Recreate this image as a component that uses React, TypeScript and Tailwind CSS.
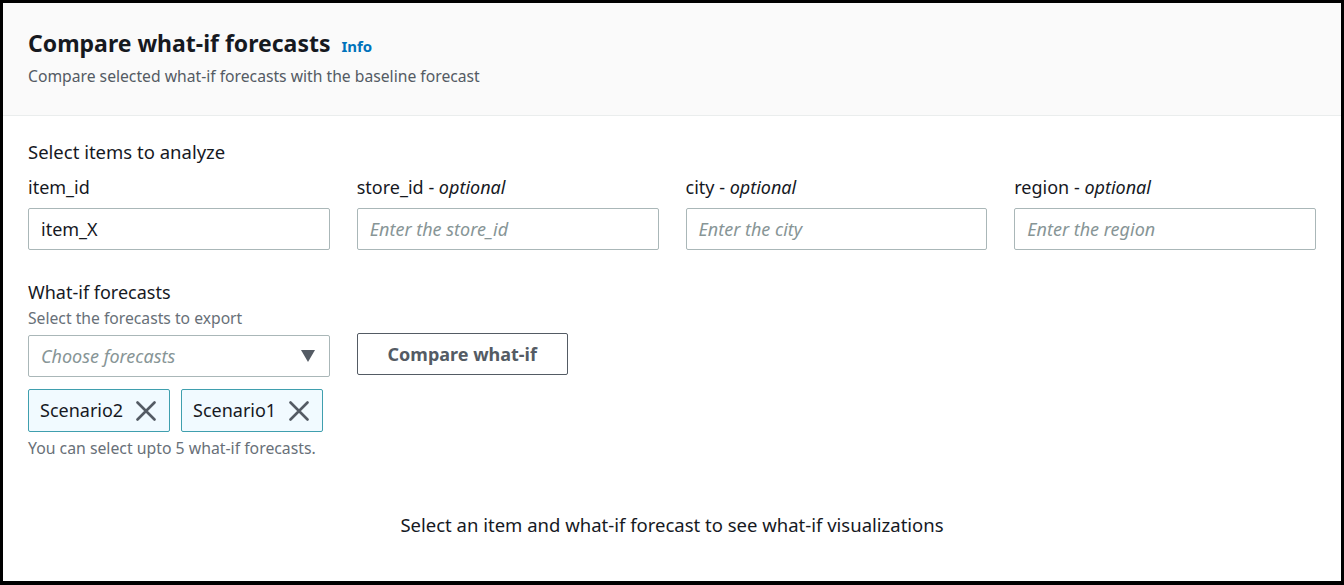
function Field({ label, optional, value, placeholder }: { label: string; optional?: boolean; value?: string; placeholder?: string }) {
  return (
    <div className="flex flex-col">
      <label className="text-[18px] leading-[24px] text-[#16191f] mb-[9px]">
        {label}
        {optional && (
          <>
            {" - "}
            <i>optional</i>
          </>
        )}
      </label>
      <div className="h-[42px] border border-[#aab7b8] rounded-[2px] flex items-center px-[12px] text-[18px]">
        {value ? (
          <span className="text-[#16191f]">{value}</span>
        ) : (
          <span className="italic text-[#879596]">{placeholder}</span>
        )}
      </div>
    </div>
  );
}

function Token({ name }: { name: string }) {
  return (
    <div className="w-[142px] h-[43px] border border-[#3f9fae] bg-[#f1faff] rounded-[2px] flex items-center justify-between pl-[11px] pr-[13px]">
      <span className="text-[18px] text-[#16191f]">{name}</span>
      <svg width="20" height="20" viewBox="0 0 20 20">
        <path d="M1.5 1.5 L18.5 18.5 M18.5 1.5 L1.5 18.5" stroke="#545b64" strokeWidth="2.6" strokeLinecap="round" />
      </svg>
    </div>
  );
}

export default function App() {
  return (
    <div
      className="w-[1344px] h-[585px] bg-black pt-[3px] pl-[3px] pr-[3px] pb-[4px]"
      style={{ fontFamily: '"Noto Sans", "Open Sans", sans-serif' }}
    >
      <div className="h-full bg-white flex flex-col">
        {/* Header */}
        <div className="bg-[#fafafa] border-b border-[#eaeded] h-[113px] px-[25px] pt-[26px]">
          <div className="flex items-baseline gap-[11px]">
            <h1 className="text-[23px] leading-[28px] font-bold text-[#16191f]">Compare what-if forecasts</h1>
            <span className="text-[15px] font-bold text-[#0073bb]">Info</span>
          </div>
          <p className="mt-[8px] text-[15.7px] leading-[20px] text-[#545b64]">
            Compare selected what-if forecasts with the baseline forecast
          </p>
        </div>

        {/* Body */}
        <div className="px-[25px] pt-[24px] flex flex-col flex-1">
          <div className="text-[18.5px] leading-[24px] text-[#16191f] mb-[11px]">Select items to analyze</div>
          <div className="grid grid-cols-4 gap-[27px]">
            <Field label="item_id" value="item_X" />
            <Field label="store_id" optional placeholder="Enter the store_id" />
            <Field label="city" optional placeholder="Enter the city" />
            <Field label="region" optional placeholder="Enter the region" />
          </div>

          <div className="mt-[30px] grid grid-cols-4 gap-[27px]">
            <div className="flex flex-col">
              <div className="text-[18px] leading-[24px] text-[#16191f]">What-if forecasts</div>
              <div className="text-[15.7px] leading-[20px] text-[#687078] mt-[4px] mb-[7px]">Select the forecasts to export</div>
              <div className="h-[42px] border border-[#aab7b8] rounded-[2px] flex items-center justify-between pl-[12px] pr-[14px]">
                <span className="italic text-[18px] text-[#879596]">Choose forecasts</span>
                <svg width="14" height="12" viewBox="0 0 14 12">
                  <path d="M0 0 H14 L7 12 Z" fill="#545b64" />
                </svg>
              </div>
              <div className="flex gap-[11px] mt-[12px]">
                <Token name="Scenario2" />
                <Token name="Scenario1" />
              </div>
              <div className="text-[15.8px] leading-[20px] text-[#687078] mt-[6px]">You can select upto 5 what-if forecasts.</div>
            </div>
            <div className="pt-[53px]">
              <button className="h-[42px] w-[211px] border border-[#545b64] rounded-[2px] text-[18px] font-bold text-[#545b64] bg-white">
                Compare what-if
              </button>
            </div>
          </div>

          <div className="mt-[55px] text-center text-[18.5px] leading-[24px] text-[#16191f]">
            Select an item and what-if forecast to see what-if visualizations
          </div>
        </div>
      </div>
    </div>
  );
}
